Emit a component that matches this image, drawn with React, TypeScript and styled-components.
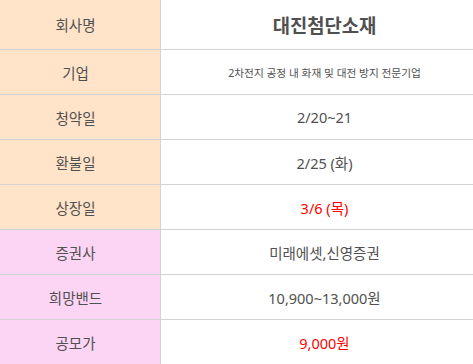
import React from "react";
import styled, { createGlobalStyle } from "styled-components";

const GlobalStyle = createGlobalStyle`
  html, body {
    margin: 0;
    padding: 0;
    background: #ffffff;
    overflow: hidden;
  }
  body {
    font-family: "Noto Sans", "Noto Sans CJK KR", sans-serif;
  }
`;

type Tone = "peach" | "pink";

const toneColor: Record<Tone, string> = {
  peach: "#ffe4c9",
  pink: "#fcd5f5",
};

const Table = styled.div`
  width: 497px;
  margin-left: -9px;
  display: grid;
  grid-template-columns: 170px 1fr;
`;

const Row = styled.div<{ $first?: boolean }>`
  display: contents;

  & > div {
    height: ${(p) => (p.$first ? "49px" : "44px")};
    border-top: ${(p) => (p.$first ? "none" : "1px solid #d3d3d3")};
  }
`;

const Label = styled.div<{ $tone: Tone }>`
  display: flex;
  align-items: center;
  justify-content: center;
  background-color: ${(p) => toneColor[p.$tone]};
  border-right: 1px solid #d3d3d3;
  color: #505050;
  font-size: 14.5px;
`;

const Value = styled.div<{ $size?: number; $bold?: boolean; $red?: boolean }>`
  display: flex;
  align-items: center;
  justify-content: center;
  background-color: #ffffff;
  color: ${(p) => (p.$red ? "#ff0000" : "#505050")};
  font-size: ${(p) => p.$size ?? 14.5}px;
  font-weight: ${(p) => (p.$bold ? 700 : 400)};
  white-space: nowrap;
`;

type Item = {
  label: string;
  value: string;
  tone: Tone;
  size?: number;
  bold?: boolean;
  red?: boolean;
};

const items: Item[] = [
  { label: "회사명", value: "대진첨단소재", tone: "peach", size: 18.8, bold: true },
  { label: "기업", value: "2차전지 공정 내 화재 및 대전 방지 전문기업", tone: "peach", size: 10.7 },
  { label: "청약일", value: "2/20~21", tone: "peach" },
  { label: "환불일", value: "2/25 (화)", tone: "peach" },
  { label: "상장일", value: "3/6 (목)", tone: "peach", red: true },
  { label: "증권사", value: "미래에셋,신영증권", tone: "pink" },
  { label: "희망밴드", value: "10,900~13,000원", tone: "pink" },
  { label: "공모가", value: "9,000원", tone: "pink", red: true },
];

const App = () => {
  return (
    <>
      <GlobalStyle />
      <Table>
        {items.map((item, i) => (
          <Row key={item.label} $first={i === 0}>
            <Label $tone={item.tone}>{item.label}</Label>
            <Value $size={item.size} $bold={item.bold} $red={item.red}>
              {item.value}
            </Value>
          </Row>
        ))}
      </Table>
    </>
  );
};

export default App;
